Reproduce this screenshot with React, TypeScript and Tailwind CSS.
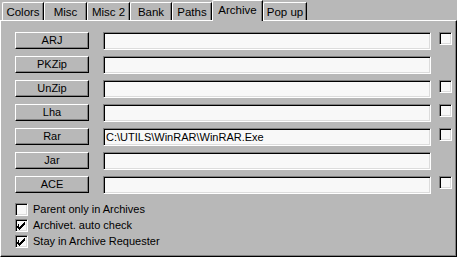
const TABS = [
  { label: 'Colors', w: 'w-[42px]' },
  { label: 'Misc', w: 'w-[43px]' },
  { label: 'Misc 2', w: 'w-[43px]' },
  { label: 'Bank', w: 'w-[42px]' },
  { label: 'Paths', w: 'w-[40px]' },
  { label: 'Archive', w: 'w-[51px]', active: true },
  { label: 'Pop up', w: 'w-[44px]' },
]

const ROWS = [
  { name: 'ARJ', value: '', check: true },
  { name: 'PKZip', value: '', check: false },
  { name: 'UnZip', value: '', check: true },
  { name: 'Lha', value: '', check: true },
  { name: 'Rar', value: 'C:\\UTILS\\WinRAR\\WinRAR.Exe', check: true },
  { name: 'Jar', value: '', check: false },
  { name: 'ACE', value: '', check: true },
]

const OPTIONS = [
  { label: 'Parent only in Archives', on: false },
  { label: 'Archivet. auto check', on: true },
  { label: 'Stay in Archive Requester', on: true },
]

function CheckBox({ on }: { on: boolean }) {
  return (
    <span
      className="w-[13px] h-[13px] shrink-0 bg-[#f8f8f8] border border-t-[#808080] border-l-[#808080] border-b-white border-r-white
                 shadow-[inset_1px_1px_#000,inset_-1px_-1px_#dcdcdc] flex items-center justify-center"
    >
      {on && (
        <svg width="9" height="9" viewBox="0 0 9 9" shapeRendering="crispEdges">
          <path d="M1 3h1v3h1v-1h1v-1h1v-1h1v-1h1v-1h1v3h-1v1h-1v1h-1v1h-1v1h-1v1h-1v-1h-1v-1h-1z" fill="#000" />
        </svg>
      )}
    </span>
  )
}

export default function App() {
  return (
    <div className="w-[457px] h-[257px] bg-[#b8b8b8] text-black text-[11px] leading-none flex flex-col font-['Liberation_Sans',Arial,sans-serif]">
      <div className="flex items-end h-[20px] pl-[2px]">
        {TABS.map((t) =>
          t.active ? (
            <div
              key={t.label}
              className={`${t.w} h-[21px] -mb-px relative z-10 bg-[#b8b8b8] border-t border-l border-white border-r border-r-black rounded-tl-[2px]
                          shadow-[inset_-1px_0_#808080] flex items-start justify-center pt-[4px] text-[11.5px]`}
            >
              {t.label}
            </div>
          ) : (
            <div
              key={t.label}
              className={`${t.w} h-[18px] border-t border-l border-white border-r border-r-black rounded-tl-[2px]
                          shadow-[inset_-1px_0_#808080] flex items-center justify-center pt-[2px] text-[11.5px]`}
            >
              {t.label}
            </div>
          )
        )}
      </div>

      <div className="flex-1 border border-t-white border-l-white border-r-black border-b-black shadow-[inset_-1px_-1px_#808080] pt-[11px] pl-[14px] flex flex-col">
        <div className="flex flex-col gap-[6px]">
          {ROWS.map((r) => (
            <div key={r.name} className="flex items-start h-[18px]">
              <button
                className="w-[74px] h-[17px] bg-[#b8b8b8] border border-t-white border-l-white border-r-black border-b-black
                           shadow-[inset_-1px_-1px_#808080] flex items-center justify-center text-[11px]"
              >
                {r.name}
              </button>
              <div
                className="ml-[14px] w-[328px] h-[18px] bg-[#f8f8f8] border border-t-[#808080] border-l-[#808080] border-r-white border-b-white
                           shadow-[inset_1px_1px_#000,inset_-1px_-1px_#dcdcdc] flex items-center pl-[2px] text-[11px]"
              >
                {r.value}
              </div>
              {r.check && (
                <div className="ml-[8px]">
                  <CheckBox on={false} />
                </div>
              )}
            </div>
          ))}
        </div>

        <div className="mt-[9px] flex flex-col gap-[3px]">
          {OPTIONS.map((o) => (
            <label key={o.label} className="flex items-center gap-[5px] h-[13px]">
              <CheckBox on={o.on} />
              <span className="text-[11px]">{o.label}</span>
            </label>
          ))}
        </div>
      </div>
    </div>
  )
}
